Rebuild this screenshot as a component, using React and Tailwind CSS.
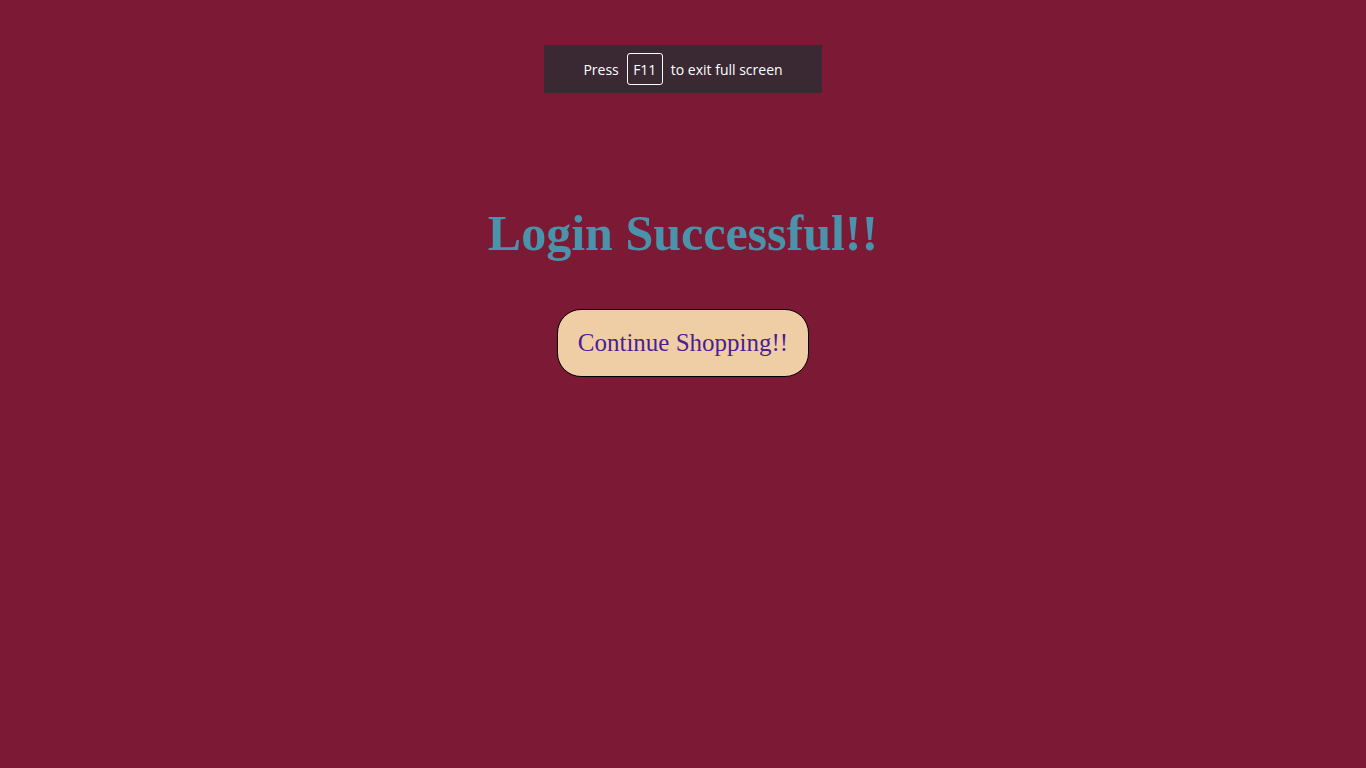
export default function App() {
  return (
    <div className="min-h-screen w-full bg-[#7c1a35] flex flex-col items-center" style={{ fontFamily: '"Liberation Serif", serif' }}>
      <div className="mt-[45px] w-[278px] h-[48px] bg-[#3a2833] flex items-center justify-center gap-[8px] text-[14px] text-white" style={{ fontFamily: '"Open Sans", sans-serif' }}>
        <span>Press</span>
        <span className="h-[32px] w-[36px] border border-white rounded-[3px] flex items-center justify-center">F11</span>
        <span>to exit full screen</span>
      </div>
      <h1 className="mt-[115px] text-[50px] font-bold text-[#4a94ab] leading-none">Login Successful!!</h1>
      <button className="mt-[51px] h-[68px] px-[20px] bg-[#f0cea5] border border-black rounded-[24px] text-[25px] text-[#4b1d96]">
        Continue Shopping!!
      </button>
    </div>
  );
}
